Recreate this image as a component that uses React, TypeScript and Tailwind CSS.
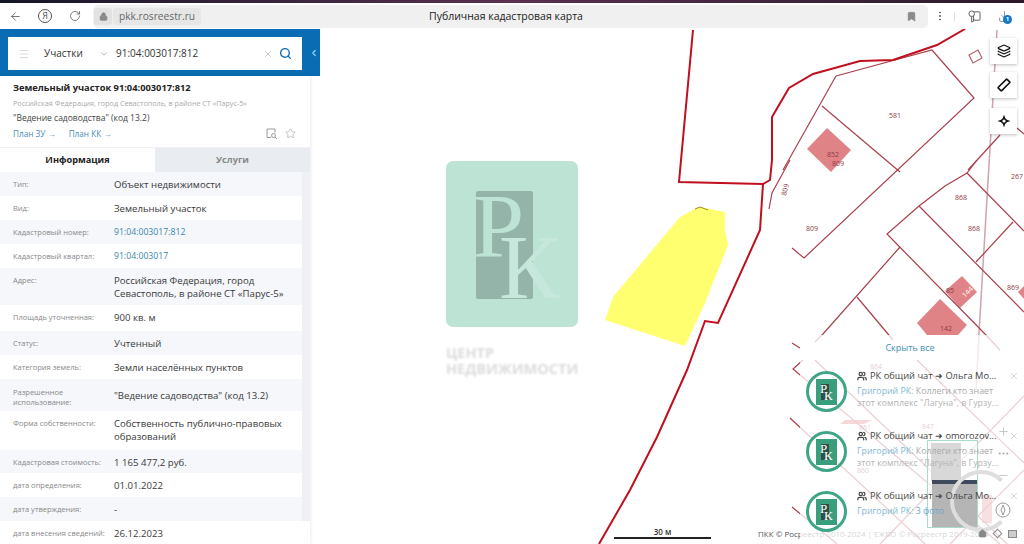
import React from 'react';
import {
  ArrowLeft,
  Bookmark,
  ChevronDown,
  ChevronLeft,
  Download,
  EllipsisVertical,
  Home,
  Layers,
  Lock,
  Menu,
  Minus,
  MoreHorizontal,
  Plus,
  RotateCw,
  Search,
  Star,
  Users,
  X,
} from 'lucide-react';

const rows = [
  { label: 'Тип:', value: 'Объект недвижимости', h: 'h-[24px]', gray: true },
  { label: 'Вид:', value: 'Земельный участок', h: 'h-[24px]' },
  { label: 'Кадастровый номер:', value: '91:04:003017:812', h: 'h-[24px]', gray: true, link: true },
  { label: 'Кадастровый квартал:', value: '91:04:003017', h: 'h-[24px]', link: true },
  { label: 'Адрес:', value: 'Российская Федерация, город Севастополь, в районе СТ «Парус-5»', h: 'h-[37px]', gray: true },
  { label: 'Площадь уточненная:', value: '900 кв. м', h: 'h-[26px]' },
  { label: 'Статус:', value: 'Учтенный', h: 'h-[24px]', gray: true },
  { label: 'Категория земель:', value: 'Земли населённых пунктов', h: 'h-[24px]' },
  { label: 'Разрешенное использование:', value: '"Ведение садоводства" (код 13.2)', h: 'h-[32px]', gray: true, tall: true },
  { label: 'Форма собственности:', value: 'Собственность публично-правовых образований', h: 'h-[39px]' },
  { label: 'Кадастровая стоимость:', value: '1 165 477,2 руб.', h: 'h-[23px]', gray: true },
  { label: 'дата определения:', value: '01.01.2022', h: 'h-[24px]' },
  { label: 'дата утверждения:', value: '-', h: 'h-[24px]', gray: true },
  { label: 'дата внесения сведений:', value: '26.12.2023', h: 'h-[23px]' },
];

const thinLines = [
  '836,76 932,50 974,98 804,258 792,248',
  '836,76 783,170',
  '822,106 900,172',
  '790,160 772,193 769,209',
  '1000,135 968,170',
  '977,160 967,173 945,186 919,206 887,234 985,334',
  '919,206 1024,312',
  '967,173 1024,231',
  '1013,222 976,262',
  '900,247 823,334 815,342',
  '857,297 893,340',
  '1017,128 1024,134',
  '792,343 800,348',
  '803,360 793,369 1000,544',
  '815,360 1024,560',
  '790,418 925,544',
  '792,507 837,544',
  '917,360 1024,463',
  '1024,396 880,544',
  '1024,470 950,544',
  '985,334 1000,350',
];

const mapLabels = [
  { t: '581', x: 895, y: 118 },
  { t: '852', x: 833, y: 157 },
  { t: '809', x: 838, y: 166 },
  { t: '809', x: 812, y: 231 },
  { t: '868', x: 961, y: 200 },
  { t: '868', x: 974, y: 231 },
  { t: '267', x: 1017, y: 179 },
  { t: '85', x: 950, y: 293 },
  { t: '869', x: 1013, y: 290 },
  { t: '142', x: 946, y: 331 },
  { t: '864', x: 876, y: 369 },
  { t: '861', x: 865, y: 430 },
  { t: '847', x: 928, y: 429 },
  { t: '860', x: 863, y: 473 },
];

function Logo({ className }: { className?: string }) {
  return (
    <svg viewBox="0 0 132 166" className={className}>
      <rect width="132" height="166" rx="7" fill="#bde3d5" />
      <rect x="30" y="30" width="57" height="108" rx="2" fill="#94b4aa" />
      <text x="27" y="96" fontFamily="Liberation Serif" fontSize="92" fill="#bde3d5">Р</text>
      <text x="53" y="137" fontFamily="Liberation Serif" fontSize="92" fill="#c6e8dc">К</text>
    </svg>
  );
}

function Avatar() {
  return (
    <div className="w-[41px] h-[41px] shrink-0 rounded-full border-[3px] border-[#3fa587] bg-white/70 flex items-center justify-center">
      <svg viewBox="0 0 21 26" className="w-[21px] h-[26px]">
        <rect width="21" height="26" fill="#3a9d7c" />
        <rect x="5" y="5" width="8" height="16" fill="#2f4f47" />
        <text x="4" y="14" fontFamily="Liberation Serif" fontSize="13" fill="#ffffff">Р</text>
        <text x="8" y="21" fontFamily="Liberation Serif" fontSize="13" fill="#ffffff">К</text>
      </svg>
    </div>
  );
}

function Notice({ title, lines }: { title: string; lines: string[] }) {
  const [who, rest] = lines[0].split(': ');
  return (
    <div className="h-[60px] flex gap-[10px] pl-[6px]">
      <div className="pt-[1px]">
        <Avatar />
      </div>
      <div className="w-[137px] leading-[12px] relative">
        <div className="flex items-center gap-[3px] h-[14px] mt-[-1px] text-[9.3px] text-[#444] font-medium whitespace-nowrap">
          <Users className="w-[10px] h-[10px] shrink-0" strokeWidth={3} />
          <span>{title}</span>
        </div>
        <div className={`mt-[2px] text-[8.8px] whitespace-nowrap ${lines[1] ? 'text-[#a9a9a9]' : 'text-[#6aa9c9]'}`}>
          <span className="text-[#7fb8d4]">{who}: </span>
          {rest}
        </div>
        {lines[1] && <div className="text-[8.8px] text-[#b5b5b5] whitespace-nowrap">{lines[1]}</div>}
      </div>
      <X className="w-[10px] h-[10px] text-[#ccc] mt-[1px] ml-[5px] shrink-0" />
    </div>
  );
}

function BrowserBar() {
  return (
    <div className="h-[29px] relative shrink-0 bg-white">
      <div className="h-[3px] bg-gradient-to-r from-[#15152a] via-[#5a3050] to-[#2b1a28]" />
      <div className="h-[26px] flex items-center text-[#555]">
        <ArrowLeft className="ml-[9px] w-[13px] h-[13px]" strokeWidth={1.5} />
        <div className="ml-[16px] w-[14px] h-[14px] rounded-full border border-[#555] text-[9px] leading-[12px] text-center font-['Open_Sans']">Я</div>
        <RotateCw className="ml-[17px] w-[12px] h-[12px]" strokeWidth={1.5} />
        <div className="ml-[12px] w-[835px] h-[23px] rounded-[5px] bg-[#f0f0f0] flex items-center relative">
          <div className="w-[18px] h-[17px] ml-[1px] rounded-[3px] bg-[#e2e2e2] flex items-center justify-center">
            <Lock className="w-[9px] h-[9px] text-[#888] fill-[#888]" />
          </div>
          <div className="ml-[1px] h-[17px] w-[88px] rounded-[3px] bg-[#e6e6e6] text-[#666] text-[10.2px] leading-[17px] text-center font-['Open_Sans']">pkk.rosreestr.ru</div>
          <div className="absolute left-[336px] top-0 leading-[23px] text-[10.5px] text-[#222] font-['Open_Sans'] whitespace-nowrap">Публичная кадастровая карта</div>
          <Bookmark className="absolute right-[11px] top-[6px] w-[11px] h-[11px] text-[#8a8a8a] fill-[#8a8a8a]" />
        </div>
        <EllipsisVertical className="ml-[6px] w-[12px] h-[12px]" strokeWidth={2} />
        <div className="ml-[8px] w-px h-[9px] bg-[#e0e0e0]" />
        <svg viewBox="0 0 14 14" className="ml-[13px] w-[13px] h-[13px]" fill="none" stroke="#555" strokeWidth="1">
          <rect x="6" y="2" width="7" height="9" rx="1" />
          <circle cx="4" cy="4" r="3" fill="#fff" />
          <path d="M4 7v6l2-1v-3" fill="#fff" />
        </svg>
        <div className="ml-[17px] relative">
          <Download className="w-[13px] h-[13px]" strokeWidth={1.2} />
          <div className="absolute left-[5px] top-[5px] w-[9px] h-[9px] rounded-full bg-[#1578c8] text-white text-[6px] leading-[9px] text-center font-bold">1</div>
        </div>
      </div>
    </div>
  );
}

function MapLayer() {
  return (
    <svg viewBox="0 29 1024 515" className="absolute left-0 top-0 w-[1024px] h-[515px]">
      <polygon points="695,209 700,207 725,212 725,230 728,245 705,303 685,346 605,320 613,297 680,217" fill="#ffff70" />
      <path d="M695,209 L700,207 L708,210" stroke="#a08a20" strokeWidth="1" fill="none" />

      <polyline points="997,30 979,333 976,390" fill="none" stroke="#cfa4aa" strokeWidth="1.5" />
      <polygon points="827,128 851,150 831,172 807,149" fill="#e08386" />
      <polygon points="962,276 977,292 960,308 945,291" fill="#e08386" />
      <polygon points="940,299 967,325 958,335 927,335 917,323" fill="#e08386" />
      <polygon points="1018,292 1024,286 1024,299" fill="#e08386" />
      <polygon points="845,420 872,420 864,424 840,424" fill="#d8686c" />
      <polygon points="982,495 992,495 992,523 982,523" fill="#e08386" />
      <polygon points="969,55 978,50 982,58 973,63" fill="none" stroke="#b5636c" strokeWidth="1.2" />

      {thinLines.map((points, i) => (
        <polyline key={i} points={points} fill="none" stroke="#a8404c" strokeWidth="1.2" />
      ))}

      <polyline
        points="693,30 679,182 763,184 770,180 772,160 772,117 789,88 813,74 860,61 893,60 937,45 965,29"
        fill="none"
        stroke="#c00f1e"
        strokeWidth="2"
      />
      <polyline
        points="763,184 760,230 718,323 705,321 687,370 657,437 630,490 599,544"
        fill="none"
        stroke="#c00f1e"
        strokeWidth="2"
      />

      {mapLabels.map((l, i) => (
        <text key={i} x={l.x} y={l.y} textAnchor="middle" fontFamily="Open Sans" fontSize="7" fill="#8a3a44">{l.t}</text>
      ))}
      <text x="0" y="0" transform="translate(786,196) rotate(-75)" fontFamily="Open Sans" fontSize="7" fill="#8a3a44">809</text>
      <text x="0" y="0" transform="translate(965,298) rotate(-45)" fontFamily="Open Sans" fontSize="7" fill="#fff">144</text>
    </svg>
  );
}

const RulerIcon = () => (
  <svg viewBox="0 0 14 14" className="w-[14px] h-[14px]" fill="none" stroke="#111" strokeWidth="1.6">
    <rect x="0.8" y="4.6" width="12.4" height="4.8" rx="0.6" transform="rotate(-45 7 7)" />
  </svg>
);

const PointIcon = () => (
  <svg viewBox="0 0 14 14" className="w-[14px] h-[14px]" fill="#111">
    <path d="M7 0.5 L8.2 4.2 A3.4 3.4 0 0 1 9.8 5.8 L13.5 7 L9.8 8.2 A3.4 3.4 0 0 1 8.2 9.8 L7 13.5 L5.8 9.8 A3.4 3.4 0 0 1 4.2 8.2 L0.5 7 L4.2 5.8 A3.4 3.4 0 0 1 5.8 4.2 Z" />
    <circle cx="7" cy="7" r="1.6" fill="#fff" />
  </svg>
);

const PlanSearchIcon = () => (
  <svg viewBox="0 0 12 12" className="w-[12px] h-[12px]" fill="none" stroke="#9a9a9a" strokeWidth="1">
    <path d="M5 9.5H1V1h8v3.5" />
    <circle cx="7.5" cy="7.5" r="2" />
    <path d="M9 9l2 2" />
  </svg>
);

export default function App() {
  return (
    <div className="w-[1024px] h-[544px] overflow-hidden flex flex-col bg-white font-['Open_Sans',sans-serif]">
      <BrowserBar />
      <div className="relative flex-1">
        <MapLayer />

        <aside className="relative w-[320px] h-full flex flex-col">
          <div className="h-[47px] shrink-0 bg-[#0a6db3] pl-[8px] pt-[8px] flex">
            <div className="w-[294px] h-[33px] bg-white flex items-center text-[#333]">
              <Menu className="ml-[10px] w-[12px] h-[12px] text-[#cfcfcf]" strokeWidth={1.5} />
              <span className="ml-[14px] w-[55px] text-[10px]">Участки</span>
              <ChevronDown className="w-[10px] h-[10px] text-[#aaa]" />
              <span className="ml-[7px] text-[10px] whitespace-nowrap">91:04:003017:812</span>
              <X className="ml-[65px] w-[10px] h-[10px] text-[#bbb]" />
              <Search className="ml-[6px] w-[13px] h-[13px] text-[#0a6db3]" strokeWidth={2.5} />
            </div>
            <ChevronLeft className="ml-[7px] mt-[11px] w-[10px] h-[10px] text-[#8fd0f5]" strokeWidth={3} />
          </div>

          <div className="w-[310px] flex-1 bg-white shadow-[0_0_4px_rgba(0,0,0,0.12)] overflow-hidden">
            <div className="h-[71px] pl-[13px] pt-[5px] relative">
              <h1 className="text-[9.3px] leading-[14px] font-bold text-[#222] whitespace-nowrap">Земельный участок 91:04:003017:812</h1>
              <p className="mt-[2px] text-[7.2px] leading-[12px] text-[#aaa] whitespace-nowrap">Российская Федерация, город Севастополь, в районе СТ «Парус-5»</p>
              <p className="mt-[2px] text-[8.5px] leading-[13px] text-[#444]">"Ведение садоводства" (код 13.2)</p>
              <div className="mt-[4px] flex gap-[13px] text-[8.2px] leading-[12px] text-[#4a8db7]">
                <span>План ЗУ →</span>
                <span>План КК →</span>
              </div>
              <div className="absolute right-[14px] top-[52px] flex gap-[7px] text-[#aaa]">
                <PlanSearchIcon />
                <Star className="w-[11px] h-[11px]" strokeWidth={1.5} />
              </div>
            </div>
            <div className="h-[25px] flex text-[9.2px] font-bold border-t border-[#f2f2f2]">
              <div className="w-[155px] flex items-center justify-center text-[#222]">Информация</div>
              <div className="w-[155px] flex items-center justify-center text-[#888] bg-[#e9edf2]">Услуги</div>
            </div>
            <div className="relative">
              <div className="absolute right-0 top-0 w-[8px] h-[349px] bg-[#eef0f3]" />
              {rows.map(row => (
                <div key={row.label} className={`${row.h} w-[302px] flex ${row.gray ? 'bg-[#f5f7fa]' : 'bg-white'}`}>
                  <div className={`w-[114px] pl-[13px] shrink-0 text-[7.5px] text-[#888] ${row.tall ? 'pt-[8px] pr-[30px] leading-[10px]' : 'pt-[6px] leading-[12px]'}`}>
                    {row.label}
                  </div>
                  <div className={`w-[180px] leading-[13px] ${row.tall ? 'pt-[10px]' : 'pt-[6px]'} ${row.link ? 'text-[8.7px] text-[#3a86ad]' : 'text-[9.6px] text-[#3a3a3a]'}`}>
                    {row.value}
                  </div>
                </div>
              ))}
            </div>
          </div>
        </aside>

        {/* логотип поверх карты */}
        <div className="absolute left-[446px] top-[132px] w-[134px]">
          <Logo className="w-[132px] h-[166px]" />
          <div className="mt-[18px] text-[14.5px] leading-[16px] font-bold text-[#dcdcdc] blur-[1px] whitespace-nowrap">
            ЦЕНТР<br />НЕДВИЖИМОСТИ
          </div>
        </div>

        <div className="absolute right-[7px] top-[9px] flex flex-col gap-[8px]">
          {[<Layers className="w-[14px] h-[14px] text-[#111]" strokeWidth={2} />, <RulerIcon />, <PointIcon />].map((icon, i) => (
            <div key={i} className={`w-[27px] h-[26px] bg-white shadow-[0_1px_3px_rgba(0,0,0,0.25)] flex items-center justify-center ${i === 2 ? 'mt-[2px]' : ''}`}>
              {icon}
            </div>
          ))}
        </div>

        <div className="absolute left-[614px] bottom-[5px] w-[97px] border-b-2 border-[#222] text-center text-[8px] leading-[10px] font-semibold text-[#333]">30 м</div>
        <div className="absolute left-[758px] bottom-[5px] text-[8px] leading-[10px] text-[#555] whitespace-nowrap">ПКК © Росреестр 2010-2024 | ЕЖВО © Росреестр 2019-2024</div>

        <div className="absolute left-[800px] top-[306px] right-0 bottom-0 bg-white/75">
          {/* картинка-призрак под текстом уведомлений */}
          <div className="absolute left-[127px] top-[105px] w-[51px] h-[88px] border border-[#a9dcc6] bg-white/50 overflow-hidden">
            <div className="absolute left-[3px] top-[2px] w-[30px] h-[38px] bg-[#d8d8d8]" />
            <div className="absolute left-[4px] top-[39px] w-[45px] h-[47px] bg-[#b5b5b5]">
              <div className="h-[4px] bg-[#3f4a5c]" />
            </div>
          </div>
          <div className="absolute left-[150px] top-[135px] w-[62px] h-[62px] rounded-full border-[4px] border-[#dedede] border-r-transparent" />
          <div className="relative">
            <div className="h-[26px] text-center text-[9px] leading-[26px] text-[#3d8fb8] pr-[4px]">Скрыть все</div>
            <div className="mt-[9px]">
              <Notice title="РК общий чат ➜ Ольга Мо..." lines={['Григорий РК: Коллеги кто знает', 'этот комплекс "Лагуна", в Гурзу...']} />
              <Notice title="РК общий чат ➜ omorozov..." lines={['Григорий РК: Коллеги кто знает', 'этот комплекс "Лагуна", в Гурзу...']} />
              <Notice title="РК общий чат ➜ Ольга Мо..." lines={['Григорий РК: 3 фото']} />
            </div>
          </div>
        </div>

        <div className="absolute right-[14px] top-[396px] flex flex-col items-center gap-[9px] text-[#aaa]">
          <Plus className="w-[13px] h-[13px]" strokeWidth={1.2} />
          <MoreHorizontal className="w-[13px] h-[13px]" />
          <Minus className="w-[13px] h-[13px]" strokeWidth={1.2} />
        </div>
        <svg viewBox="0 0 16 16" className="absolute right-[13px] top-[473px] w-[16px] h-[16px]" fill="none" stroke="#999">
          <circle cx="8" cy="8" r="7" fill="#ffffff" fillOpacity="0.6" />
          <path d="M8 3 L10 8 L8 13 L6 8 Z" />
        </svg>
        <div className="absolute right-[7px] bottom-[6px] flex items-center gap-[6px] text-[#888]">
          <Home className="w-[9px] h-[9px] fill-[#888]" />
          <div className="w-[7px] h-[7px] rotate-45 border border-[#888] mx-[1px]" />
          <div className="w-[9px] h-[8px] border border-[#888] bg-[#ccc]" />
        </div>
      </div>
    </div>
  );
}
